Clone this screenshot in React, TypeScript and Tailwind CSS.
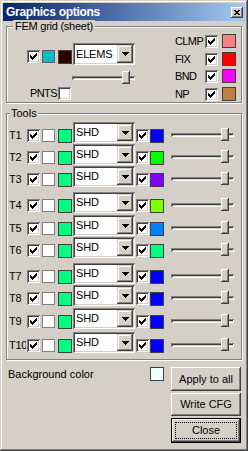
import React from "react";

const sunken =
  "shadow-[inset_1px_1px_0_#808080,inset_-1px_-1px_0_#ffffff,inset_2px_2px_0_#404040,inset_-2px_-2px_0_#d4d0c8]";
const raised =
  "shadow-[inset_-1px_-1px_0_#404040,inset_1px_1px_0_#ffffff,inset_-2px_-2px_0_#808080]";
const raisedBtn =
  "shadow-[inset_-1px_-1px_0_#404040,inset_1px_1px_0_#d4d0c8,inset_-2px_-2px_0_#808080,inset_2px_2px_0_#ffffff]";
const etched = "border border-[#808080] shadow-[inset_1px_1px_0_#ffffff,1px_1px_0_#ffffff]";

function Check() {
  return (
    <div className={`w-[13px] h-[13px] shrink-0 bg-white flex items-center justify-center ${sunken}`}>
      <svg width="7" height="7" viewBox="0 0 7 7" shapeRendering="crispEdges">
        <path
          d="M6 0h1v1h-1zM5 1h2v1h-2zM0 2h1v1h-1zM4 2h3v1h-3zM0 3h2v1h-2zM3 3h3v1h-3zM0 4h5v1h-5zM1 5h3v1h-3zM2 6h1v1h-1z"
          fill="#000"
        />
      </svg>
    </div>
  );
}

function Combo({ text, tall }: { text: string; tall?: boolean }) {
  return (
    <div className={`w-[62px] ${tall ? "h-[22px]" : "h-[21px]"} bg-white flex items-stretch p-[2px] ${sunken}`}>
      <div className="flex-1 flex items-center pl-[1px] text-[11px] leading-[13px] text-black tracking-[-0.2px]">{text}</div>
      <div className={`w-[16px] bg-[#d4d0c8] flex items-center justify-center ${raisedBtn}`}>
        <svg width="7" height="4" viewBox="0 0 7 4" shapeRendering="crispEdges">
          <path d="M0 0h7v1H0zM1 1h5v1H1zM2 2h3v1H2zM3 3h1v1H3z" fill="#000" />
        </svg>
      </div>
    </div>
  );
}

function Slider() {
  return (
    <div className="relative w-[63px] h-[13px]">
      <div className={`absolute left-0 right-0 top-[5px] h-[4px] ${sunken}`} />
      <div className={`absolute left-[50px] top-0 w-[8px] h-[13px] bg-[#d4d0c8] ${raised}`} />
    </div>
  );
}

const femRight = [
  { label: "CLMP", color: "bg-[#ff8080]", h: "h-[18px]" },
  { label: "FIX", color: "bg-[#ff0000]", h: "h-[17px]" },
  { label: "BND", color: "bg-[#ff00ff]", h: "h-[18px]" },
  { label: "NP", color: "bg-[#c08040]", h: "h-[14px]" },
];

const tools = [
  { label: "T1", color: "bg-[#0000ff]", h: "h-[22px]" },
  { label: "T2", color: "bg-[#00ff00]", h: "h-[22px]" },
  { label: "T3", color: "bg-[#8000ff]", h: "h-[26px]" },
  { label: "T4", color: "bg-[#80ff00]", h: "h-[23px]" },
  { label: "T5", color: "bg-[#0080ff]", h: "h-[22px]" },
  { label: "T6", color: "bg-[#00ff80]", h: "h-[26px]" },
  { label: "T7", color: "bg-[#0000ff]", h: "h-[22px]" },
  { label: "T8", color: "bg-[#0000ff]", h: "h-[23px]" },
  { label: "T9", color: "bg-[#0000ff]", h: "h-[24px]" },
  { label: "T10", color: "bg-[#0000ff]", h: "h-[21px]" },
];

function Button({ children, h }: { children: React.ReactNode; h: string }) {
  return (
    <div className={`${h} w-[70px] bg-[#d4d0c8] flex items-center justify-center ${raised}`}>{children}</div>
  );
}

export default function App() {
  return (
    <div
      className={`w-[248px] h-[451px] bg-[#d4d0c8] p-[3px] flex flex-col font-['Liberation_Sans',Arial,sans-serif] text-[11px] leading-[13px] text-black shadow-[inset_-1px_-1px_0_#404040,inset_1px_1px_0_#d4d0c8,inset_-2px_-2px_0_#808080,inset_2px_2px_0_#ffffff]`}
    >
      {/* Title bar */}
      <div className="h-[18px] shrink-0 flex items-center justify-between pl-[3px] pr-[2px] bg-linear-to-r from-[#0a246a] to-[#a6caf0]">
        <span className="text-white font-bold text-[12px] leading-[14px] tracking-[-0.3px]">Graphics options</span>
        <div className={`w-[12px] h-[11px] bg-[#d4d0c8] flex items-center justify-center ${raised}`}>
          <svg width="6" height="5" viewBox="0 0 6 5" shapeRendering="crispEdges">
            <path d="M0 0h2v1H0zM4 0h2v1H4zM1 1h4v1H1zM2 2h2v1H2zM1 3h4v1H1zM0 4h2v1H0zM4 4h2v1H4z" fill="#000" />
          </svg>
        </div>
      </div>

      {/* FEM grid group */}
      <div className={`relative mt-[5px] mx-[3px] h-[77px] shrink-0 flex justify-between pl-[20px] pr-[5px] ${etched}`}>
        <span className="absolute left-[6px] top-[-7px] px-[2px] bg-[#d4d0c8] tracking-[-0.25px]">FEM grid (sheet)</span>
        <div className="pt-[16px] flex flex-col">
          <div className="flex items-start h-[22px]">
            <div className="mt-[7px]">
              <Check />
            </div>
            <div className="ml-[2px] mt-[7px] w-[13px] h-[13px] bg-[#00c0c0] border border-[#606060]" />
            <div className="ml-[3px] mt-[7px] w-[14px] h-[14px] bg-[#300000] border border-[#404040]" />
            <div className="ml-[1px]">
              <Combo text="ELEMS" tall />
            </div>
          </div>
          <div className="mt-[6px] ml-[45px]">
            <Slider />
          </div>
          <div className="mt-[3px] flex items-center h-[13px]">
            <span className="ml-[3px] w-[28px] tracking-[-0.6px] whitespace-nowrap">PNTS</span>
            <div className={`w-[13px] h-[13px] bg-white ${sunken}`} />
          </div>
        </div>
        <div className="pt-[7px] flex flex-col">
          {femRight.map((r) => (
            <div key={r.label} className={r.h}>
              <div className="flex items-center h-[14px]">
                <span className="w-[30px] leading-[14px] tracking-[-0.6px] whitespace-nowrap">{r.label}</span>
                <Check />
                <div className={`ml-[4px] w-[14px] h-[14px] border border-[#404040] ${r.color}`} />
              </div>
            </div>
          ))}
        </div>
      </div>

      {/* Tools group */}
      <div className={`relative mt-[10px] mx-[3px] shrink-0 flex flex-col pt-[8px] pb-[6px] pl-[2px] ${etched}`}>
        <span className="absolute left-[3px] top-[-7px] px-[1px] bg-[#d4d0c8]">Tools</span>
        {tools.map((t) => (
          <div key={t.label} className={`flex items-start ${t.h}`}>
            <div className="w-[17px] mr-[1px] mt-[7px] leading-[13px] overflow-hidden whitespace-nowrap tracking-[-0.3px]">{t.label}</div>
            <div className="mt-[7px]">
              <Check />
            </div>
            <div className="ml-[2px] mt-[7px] w-[13px] h-[13px] bg-white border border-[#808080]" />
            <div className="ml-[3px] mt-[7px] w-[14px] h-[14px] bg-[#00ff80] border border-[#404040]" />
            <div className="ml-[1px]">
              <Combo text="SHD" />
            </div>
            <div className="ml-[1px] mt-[7px]">
              <Check />
            </div>
            <div className={`ml-[1px] mt-[7px] w-[14px] h-[14px] border border-[#404040] ${t.color}`} />
            <div className="ml-[7px] mt-[6px]">
              <Slider />
            </div>
          </div>
        ))}
      </div>

      {/* Bottom */}
      <div className="flex items-start pt-[7px] pr-[4px]">
        <span className="flex-1 pl-[5px] mt-[1px]">Background color</span>
        <div className="w-[14px] h-[14px] bg-[#f0ffff] border border-[#404040]" />
        <div className="ml-[7px] flex flex-col">
          <Button h="h-[24px]">Apply to all</Button>
          <div className="mt-[2px]">
            <Button h="h-[23px]">Write CFG</Button>
          </div>
          <div className="mt-[2px] h-[25px] w-[70px] border border-black">
            <div className={`h-full bg-[#d4d0c8] p-[3px] ${raised}`}>
              <div className="h-full border border-dotted border-black flex items-center justify-center">Close</div>
            </div>
          </div>
        </div>
      </div>
    </div>
  );
}
